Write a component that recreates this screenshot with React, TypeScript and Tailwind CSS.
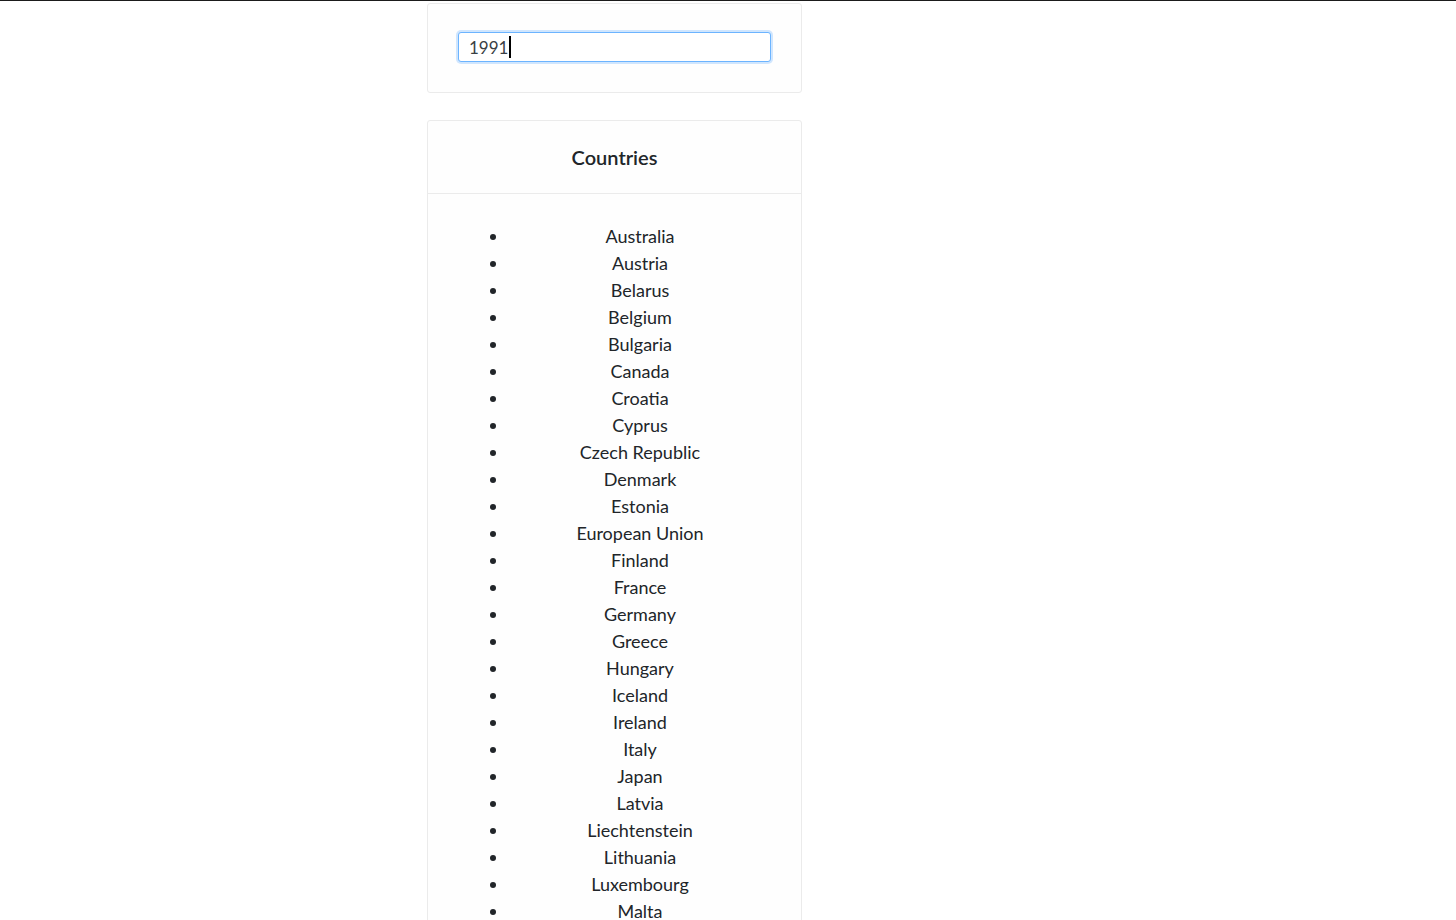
const countries = [
  "Australia",
  "Austria",
  "Belarus",
  "Belgium",
  "Bulgaria",
  "Canada",
  "Croatia",
  "Cyprus",
  "Czech Republic",
  "Denmark",
  "Estonia",
  "European Union",
  "Finland",
  "France",
  "Germany",
  "Greece",
  "Hungary",
  "Iceland",
  "Ireland",
  "Italy",
  "Japan",
  "Latvia",
  "Liechtenstein",
  "Lithuania",
  "Luxembourg",
  "Malta",
  "Netherlands",
  "New Zealand",
  "Norway",
  "Poland",
];

export default function App() {
  return (
    <div className="min-h-screen bg-white font-['Lato','Liberation_Sans',sans-serif] text-[#212529]">
      <div className="h-px bg-[#1b1b1b]" />
      <div className="ml-[427px] w-[375px] pt-[2px]">
        {/* Year filter */}
        <div className="rounded-[3px] border border-[#ebebeb] bg-[#fefefe] px-[30px] pt-[28px] pb-[30px]">
          <div className="flex h-[30px] items-center rounded-[3px] border border-[#6cb4ff] bg-white pt-[2px] pl-[10px] shadow-[0_0_0_2px_rgba(0,123,255,0.18)]">
            <span className="text-[17px] text-[#3a3f44]">1991</span>
            <span className="ml-[1px] mb-[2px] h-[22px] w-[2px] bg-black" />
          </div>
        </div>

        {/* Country list */}
        <div className="mt-[27px] rounded-[3px] border border-[#ebebeb] bg-[#fefefe]">
          <div className="flex h-[73px] items-center justify-center border-b border-[#ebebeb]">
            <h2 className="text-[20px] font-semibold text-[#212529]">Countries</h2>
          </div>
          <div className="px-[30px] pt-[29px] pb-[30px]">
            <ul className="list-disc pl-[51px]">
              {countries.map((c) => (
                <li key={c} className="text-center text-[18px] leading-[27px]">
                  {c}
                </li>
              ))}
            </ul>
          </div>
        </div>
      </div>
    </div>
  );
}
